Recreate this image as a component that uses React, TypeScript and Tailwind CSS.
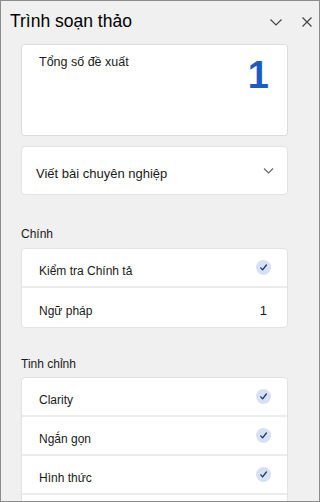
import { FC } from 'react';

const CheckBadge: FC = () => (
  <span className="flex h-[15px] w-[15px] items-center justify-center rounded-full bg-[#d6e1f3]">
    <svg width="9" height="9" viewBox="0 0 10 10" fill="none">
      <path d="M2 5.4 L4 7.6 L8.2 2.2" stroke="#1b3b78" strokeWidth="1.5" strokeLinecap="round" strokeLinejoin="round" />
    </svg>
  </span>
);

const Row: FC<{ label: string; right?: React.ReactNode; last?: boolean }> = ({ label, right, last }) => (
  <div
    className={`flex h-[39px] items-center justify-between pl-[17px] pr-[16px] ${
      last ? '' : 'border-b-2 border-[#ececec]'
    }`}
  >
    <span className="mt-[6px] text-[12px] text-[#1a1a1a]">{label}</span>
    {right}
  </div>
);

export default function App() {
  return (
    <div
      className="flex h-[502px] w-[320px] flex-col overflow-hidden border border-[#8c8c8c] bg-[#f0f0f0] text-[#1a1a1a]"
      style={{ fontFamily: '"Liberation Sans", Arial, sans-serif' }}
    >
      {/* Header */}
      <div className="flex h-[42px] shrink-0 items-center justify-between pl-[9px] pr-[6px]">
        <h1 className="text-[17.5px] leading-none text-black">Trình soạn thảo</h1>
        <div className="flex items-center gap-[18px]">
          <svg width="14" height="14" viewBox="0 0 14 14" fill="none">
            <path d="M1.5 4.5 L7 10 L12.5 4.5" stroke="#444" strokeWidth="1.2" />
          </svg>
          <svg width="12" height="12" viewBox="0 0 12 12" fill="none">
            <path d="M1.5 1.5 L10.5 10.5 M10.5 1.5 L1.5 10.5" stroke="#444" strokeWidth="1.2" />
          </svg>
        </div>
      </div>

      <div className="flex flex-col pl-[20px] pr-[31px] pt-[1px]">
        {/* Summary card */}
        <div className="flex h-[92px] justify-between rounded-[3px] border border-[#dcdcdc] bg-white pl-[17px] pr-[18px] pt-[8px]">
          <span className="text-[12.5px]">Tổng số đề xuất</span>
          <span className="mt-[0px] text-[38px] font-bold leading-[1.2] text-[#1d5bc4]">1</span>
        </div>

        {/* Select */}
        <div className="mt-[10px] flex h-[49px] items-center justify-between rounded-[4px] border border-[#e2e2e2] bg-white pl-[14px] pr-[13px]">
          <span className="mt-[6px] text-[13px]">Viết bài chuyên nghiệp</span>
          <svg width="11" height="8" viewBox="0 0 11 8" fill="none">
            <path d="M1 1.5 L5.5 6 L10 1.5" stroke="#666" strokeWidth="1.1" />
          </svg>
        </div>

        <div className="mt-[29px] h-[20px] text-[12px] leading-[20px]">Chính</div>
        <div className="mt-[4px] overflow-hidden rounded-[4px] border border-[#e2e2e2] bg-white">
          <Row label="Kiểm tra Chính tả" right={<CheckBadge />} />
          <Row label="Ngữ pháp" right={<span className="mt-[6px] pr-[4px] text-[13px]">1</span>} last />
        </div>

        <div className="mt-[26px] h-[20px] text-[12px] leading-[20px]">Tinh chỉnh</div>
        <div className="mt-[3px] overflow-hidden rounded-[4px] border border-[#e2e2e2] bg-white">
          <Row label="Clarity" right={<CheckBadge />} />
          <Row label="Ngắn gọn" right={<CheckBadge />} />
          <Row label="Hình thức" right={<CheckBadge />} />
          <div className="h-[39px]" />
        </div>
      </div>
    </div>
  );
}
